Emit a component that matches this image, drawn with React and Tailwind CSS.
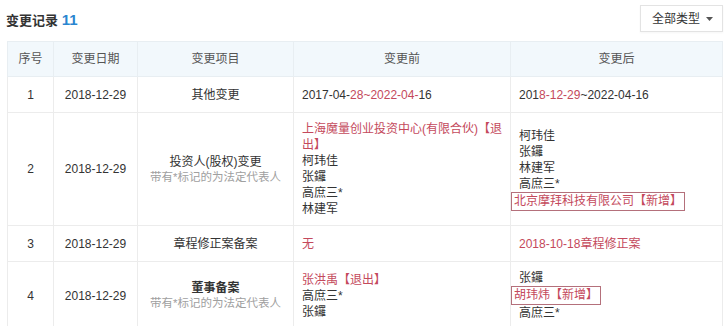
const RED = "text-[#c4495c]";

function Red({ children }) {
  return <span className={RED}>{children}</span>;
}

function Added({ children }) {
  return (
    <div className="-ml-[8px] inline-block border border-[#b4707b] px-[2px] py-[1px] leading-[15px]">
      <span className={RED}>{children}</span>
    </div>
  );
}

function Item({ title, note }) {
  return (
    <div className="text-center">
      <div className="text-[#333]">{title}</div>
      {note && <div className="text-[11.5px] leading-[15px] text-[#a0a0a0]">{note}</div>}
    </div>
  );
}

const note = "带有*标记的为法定代表人";

const rows = [
  {
    no: 1,
    date: "2018-12-29",
    item: <Item title="其他变更" />,
    before: (
      <div>
        2017-04-<Red>28~2022-04-</Red>16
      </div>
    ),
    after: (
      <div>
        201<Red>8-12-29</Red>~2022-04-16
      </div>
    )
  },
  {
    no: 2,
    date: "2018-12-29",
    item: <Item title="投资人(股权)变更" note={note} />,
    before: (
      <div>
        <div className={RED}>上海魔量创业投资中心(有限合伙)【退出】</div>
        <div>柯玮佳</div>
        <div>张鑼</div>
        <div>高庶三*</div>
        <div>林建军</div>
      </div>
    ),
    after: (
      <div>
        <div>柯玮佳</div>
        <div>张鑼</div>
        <div>林建军</div>
        <div>高庶三*</div>
        <Added>北京摩拜科技有限公司【新增】</Added>
      </div>
    )
  },
  {
    no: 3,
    date: "2018-12-29",
    item: <Item title="章程修正案备案" />,
    before: <div className={RED}>无</div>,
    after: <div className={RED}>2018-10-18章程修正案</div>
  },
  {
    no: 4,
    date: "2018-12-29",
    item: <Item title={<span className="font-semibold">董事备案</span>} note={note} />,
    before: (
      <div>
        <div className={RED}>张洪禹【退出】</div>
        <div>高庶三*</div>
        <div>张鑼</div>
      </div>
    ),
    after: (
      <div>
        <div>张鑼</div>
        <Added>胡玮炜【新增】</Added>
        <div>高庶三*</div>
      </div>
    )
  }
];

export default function App() {
  return (
    <div
      className="h-[326px] w-[728px] overflow-hidden bg-white text-[12px] leading-4 text-[#333]"
      style={{ fontFamily: '"Liberation Sans", "Noto Sans CJK SC", sans-serif' }}
    >
      <div className="flex h-[41px] items-start justify-between pl-[6px] pr-[5px]">
        <div className="mt-[12px] text-[13px] font-bold leading-4 text-[#333]">
          变更记录 <span className="text-[15px] text-[#2a86d0]">11</span>
        </div>
        <button className="mt-[5px] flex h-[27px] items-center gap-[6px] border border-[#e3e3e3] bg-white pl-[11px] pr-[9px] text-[12px] text-[#333] shadow-[0_1px_2px_rgba(0,0,0,0.04)]">
          全部类型
          <svg width="7" height="4" viewBox="0 0 7 4">
            <path d="M0 0h7L3.5 4z" fill="#555" />
          </svg>
        </button>
      </div>

      <table className="ml-[7px] w-[715px] table-fixed border-collapse">
        <colgroup>
          <col className="w-[46px]" />
          <col className="w-[84px]" />
          <col className="w-[156px]" />
          <col className="w-[217px]" />
          <col className="w-[212px]" />
        </colgroup>
        <thead>
          <tr className="h-[35px] bg-[#f2f8fc] text-[#555]">
            {["序号", "变更日期", "变更项目", "变更前", "变更后"].map((h) => (
              <th key={h} className="border border-[#e8eef2] font-normal">
                {h}
              </th>
            ))}
          </tr>
        </thead>
        <tbody>
          {rows.map((r) => (
            <tr key={r.no}>
              <td className="h-[36px] border border-[#ececec] py-[8px] text-center">{r.no}</td>
              <td className="border border-[#ececec] text-center">{r.date}</td>
              <td className="border border-[#ececec] px-2">{r.item}</td>
              <td className="border border-[#ececec] py-[8px] pl-[8px] pr-[4px]">{r.before}</td>
              <td className="border border-[#ececec] py-[8px] pl-[8px] pr-[4px]">{r.after}</td>
            </tr>
          ))}
        </tbody>
      </table>
    </div>
  );
}
